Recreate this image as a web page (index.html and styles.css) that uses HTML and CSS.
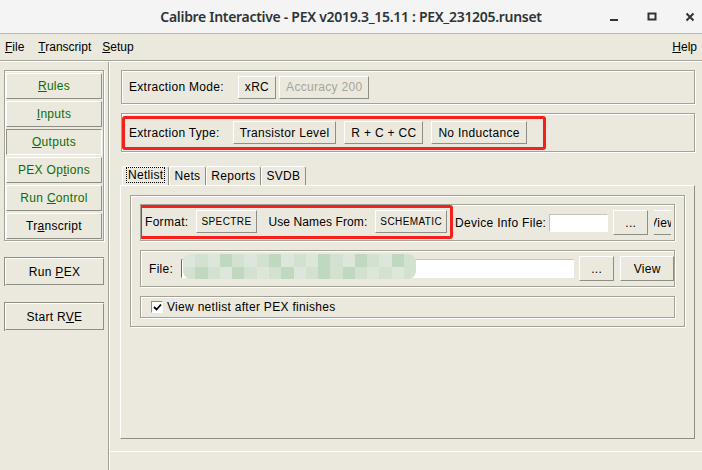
FILE: index.html
```html
<!DOCTYPE html>
<html lang="en">
<head>
  <meta charset="UTF-8">
  <title>Calibre Interactive - PEX</title>
  <link rel="stylesheet" href="styles.css">
</head>
<body>
  <!-- barra de título da janela -->
  <div class="titlebar">
    <span class="title">Calibre Interactive - PEX v2019.3_15.11 : PEX_231205.runset</span>
    <div class="winbtns">
      <svg width="12" height="12" viewBox="0 0 12 12"><rect x="2" y="8" width="8" height="2" fill="#2e3436"/></svg>
      <svg width="12" height="12" viewBox="0 0 12 12"><rect x="2.5" y="2.5" width="7" height="6" fill="none" stroke="#2e3436" stroke-width="2"/></svg>
      <svg width="12" height="12" viewBox="0 0 12 12"><path d="M2.5 2.5 L9.5 9.5 M9.5 2.5 L2.5 9.5" stroke="#2e3436" stroke-width="2"/></svg>
    </div>
  </div>

  <div class="menubar">
    <span class="first"><u>F</u>ile</span>
    <span><u>T</u>ranscript</span>
    <span><u>S</u>etup</span>
    <span class="help"><u>H</u>elp</span>
  </div>

  <div class="main">
    <!-- menu lateral -->
    <aside class="sidebar">
      <div class="group navgroup">
        <button class="navbtn"><u>R</u>ules</button>
        <button class="navbtn"><u>I</u>nputs</button>
        <button class="navbtn pressed"><u>O</u>utputs</button>
        <button class="navbtn">PEX Op<u>t</u>ions</button>
        <button class="navbtn">Run <u>C</u>ontrol</button>
        <button class="navbtn black">Tr<u>a</u>nscript</button>
      </div>
      <div class="frame"><button class="navbtn black">Run <u>P</u>EX</button></div>
      <div class="frame"><button class="navbtn black">Start R<u>V</u>E</button></div>
    </aside>

    <section class="content">
      <div class="panel row mode">
        <span class="label">Extraction Mode:</span>
        <button class="btn">xRC</button>
        <button class="btn disabled">Accuracy 200</button>
      </div>

      <div class="panel row type">
        <div class="mark">
          <span class="label">Extraction Type:</span>
          <button class="btn">Transistor Level</button>
          <button class="btn">R + C + CC</button>
          <button class="btn">No Inductance</button>
        </div>
      </div>

      <div class="tabs">
        <span class="tab active"><span class="focus">Netlist</span></span>
        <span class="tab">Nets</span>
        <span class="tab">Reports</span>
        <span class="tab">SVDB</span>
      </div>

      <div class="tabpage">
        <div class="group inner">
          <div class="panel row fmt">
            <div class="mark">
              <span class="label">Format:</span>
              <button class="btn small">SPECTRE</button>
              <span class="label gap">Use Names From:</span>
              <button class="btn small">SCHEMATIC</button>
            </div>
            <span class="label devlabel">Device Info File:</span>
            <input class="field devinfo" type="text">
            <button class="btn dots">...</button>
            <span class="clip"><button class="btn view">View</button></span>
          </div>

          <div class="panel row file">
            <span class="label">File:</span>
            <div class="filebox">
              <div class="blur">
                <span class="c1"></span><span class="c2"></span><span class="c1"></span><span class="c3"></span><span class="c2"></span><span class="c1"></span><span class="c2"></span><span class="c3"></span><span class="c1"></span><span class="c2"></span><span class="c1"></span><span class="c3"></span><span class="c2"></span><span class="c1"></span><span class="c3"></span><span class="c2"></span><span class="c1"></span><span class="c3"></span><span class="c2"></span>
                <span class="c2"></span><span class="c3"></span><span class="c2"></span><span class="c1"></span><span class="c3"></span><span class="c2"></span><span class="c1"></span><span class="c2"></span><span class="c3"></span><span class="c1"></span><span class="c2"></span><span class="c3"></span><span class="c2"></span><span class="c3"></span><span class="c2"></span><span class="c1"></span><span class="c2"></span><span class="c1"></span><span class="c2"></span>
              </div>
              <input class="field" type="text">
            </div>
            <button class="btn dots">...</button>
            <button class="btn view">View</button>
          </div>

          <div class="panel row check">
            <span class="box">
              <svg width="9" height="9" viewBox="0 0 9 9"><path d="M1 4 L3.5 6.5 L8 1.5" fill="none" stroke="#000" stroke-width="1.8"/></svg>
            </span>
            <span class="label">View netlist after PEX finishes</span>
          </div>
        </div>
      </div>

      <div class="status"></div>
    </section>
  </div>
</body>
</html>
```

FILE: styles.css
```css
body {
  margin: 0;
  width: 702px;
  height: 470px;
  overflow: hidden;
  background: #ebe9dd;
  font-family: "Liberation Sans", Arial, sans-serif;
  font-size: 12px;
  letter-spacing: 0.3px;
  color: #000;
}

button, input {
  font-family: "Liberation Sans", Arial, sans-serif;
  font-size: 12px;
  letter-spacing: 0.3px;
}

.label {
  white-space: nowrap;
}

/* barra de título */
.titlebar {
  height: 33px;
  background: #f4f4f4;
  border-bottom: 1px solid #b8b8b4;
  display: flex;
  align-items: center;
  justify-content: center;
  position: relative;
  letter-spacing: normal;
}

.title {
  font-family: "Noto Sans", sans-serif;
  font-size: 14px;
  font-weight: 600;
  color: #2e3436;
  letter-spacing: -0.3px;
}

.winbtns {
  position: absolute;
  right: 6px;
  top: 11px;
  display: flex;
  gap: 26px;
}

/* menu */
.menubar {
  height: 26px;
  display: flex;
  align-items: center;
  gap: 11px;
  padding: 0 5px;
  border-bottom: 1px solid #a3a298;
  box-shadow: 0 1px 0 #fff;
  letter-spacing: 0;
}

.menubar .first {
  margin-right: 3px;
}

.help {
  margin-left: auto;
}

.main {
  display: flex;
  margin-top: 1px;
  height: 408px;
}

/* lateral */
.sidebar {
  width: 100px;
  padding: 8px 4px 0 4px;
  border-right: 1px solid #a3a298;
  box-shadow: 1px 0 0 #fff;
  display: flex;
  flex-direction: column;
}

.group {
  border: 1px solid #a3a298;
  box-shadow: inset 1px 1px 0 #fff, 1px 1px 0 #fff;
}

.navgroup {
  display: flex;
  flex-direction: column;
  gap: 2px;
  padding: 2px 1px 1px 1px;
}

.navbtn {
  height: 26px;
  background: #ebe9dd;
  border: 1px solid;
  border-color: #fff #8f8e86 #8f8e86 #fff;
  color: #0a6e0a;
  padding: 0;
}

.navbtn.pressed {
  border-color: #8f8e86 #fff #fff #8f8e86;
}

.navbtn.black {
  color: #000;
}

.frame {
  margin-top: 16px;
  border-left: 1px solid #8f8e86;
  border-top: 1px solid #8f8e86;
  display: flex;
  flex-direction: column;
  padding: 0 0 1px 0;
  width: 99px;
}

.frame .navbtn {
  height: 27px;
}

/* área principal */
.content {
  width: 592px;
  padding: 8px 10px 0 12px;
  display: flex;
  flex-direction: column;
}

.panel {
  border: 1px solid #a3a298;
  box-shadow: inset 1px 1px 0 #fff, 1px 1px 0 #fff;
}

.row {
  display: flex;
  align-items: center;
  min-width: 0;
}

.mode {
  height: 32px;
  padding-left: 7px;
}

.mode .label {
  margin-right: 14px;
}

.mode .btn {
  margin-right: 3px;
}

.type {
  margin-top: 9px;
  height: 37px;
}

.mark {
  display: flex;
  align-items: center;
  flex-shrink: 0;
  border: 3px solid #f5201a;
  border-radius: 3px;
  height: 28px;
  padding-left: 4px;
  padding-right: 16px;
}

.type .label {
  margin-right: 13px;
}

.type .btn {
  margin-right: 8px;
}

.type .btn:last-child {
  margin-right: 0;
}

.btn {
  height: 23px;
  background: #ebe9dd;
  border: 1px solid;
  border-color: #fff #8f8e86 #8f8e86 #fff;
  padding: 0 6px;
  color: #000;
}

.btn.disabled {
  color: #a6a59d;
}

.btn.small {
  font-size: 10px;
  letter-spacing: 0.4px;
}

/* abas */
.tabs {
  display: flex;
  margin-top: 14px;
  margin-left: 1px;
  height: 19px;
}

.tab {
  padding: 2px 5px 0 4px;
  border: 1px solid #8f8e86;
  border-bottom: none;
  border-color: #fff #8f8e86 transparent #fff;
  border-radius: 3px 3px 0 0;
}

.tab.active {
  padding: 1px 3px 0 3px;
}

.focus {
  border: 1px dotted #000;
  padding: 0 1px;
}

.tabpage {
  flex: 0 0 auto;
  height: 243px;
  margin-left: -1px;
  border: 1px solid #a3a298;
  border-color: #fff #8f8e86 #8f8e86 #fff;
  padding: 9px 9px 0 9px;
}

.inner {
  padding: 8px 9px 8px 9px;
  display: flex;
  flex-direction: column;
  gap: 9px;
}

.fmt {
  height: 35px;
  overflow: hidden;
}

.fmt .mark {
  margin: -2px 0 0 -2px;
  height: 28px;
  padding-right: 3px;
  padding-left: 3px;
}

.fmt .mark .label {
  margin-right: 8px;
}

.fmt .gap {
  margin-left: 12px;
  margin-right: 3px;
  letter-spacing: 0.1px;
}

.fmt .btn.small {
  padding: 0 4px;
}

.devlabel {
  margin-left: 2px;
  margin-right: 3px;
}

.field {
  height: 17px;
  border: 1px solid;
  border-color: #c5c3b8 #fff #fff #c5c3b8;
  background: #fff;
  padding: 0;
}

.devinfo {
  width: 57px;
  height: 16px;
  flex-shrink: 0;
}

.dots {
  width: 35px;
  height: 25px;
  margin-left: 5px;
  flex-shrink: 0;
}

/* botão View cortado pela borda do painel */
.clip {
  width: 17px;
  height: 25px;
  margin-left: 6px;
  overflow: hidden;
  display: flex;
  justify-content: center;
  flex-shrink: 0;
}

.clip .view {
  margin-left: 0;
  flex-shrink: 0;
}

.file {
  height: 35px;
  padding-left: 8px;
}

.file .label {
  margin-right: 8px;
}

.filebox {
  display: flex;
  align-items: center;
  position: relative;
  width: 393px;
}

.filebox .field {
  width: 393px;
  border-left: 1px solid #6a6a66;
}

.blur {
  position: absolute;
  left: 2px;
  top: -5px;
  width: 233px;
  height: 25px;
  border-radius: 8px;
  overflow: hidden;
  display: grid;
  grid-template-columns: repeat(19, 1fr);
  grid-template-rows: 1fr 1fr;
}

.c1 { background: #dce6da; }
.c2 { background: #d2e1d0; }
.c3 { background: #c1d8c0; }

.view {
  width: 54px;
  height: 25px;
  margin-left: 6px;
}

.check {
  height: 20px;
  padding-left: 10px;
}

.box {
  width: 10px;
  height: 10px;
  background: #fff;
  border: 1px solid;
  border-color: #8f8e86 #fff #fff #8f8e86;
  display: flex;
  align-items: center;
  justify-content: center;
  margin-right: 4px;
}

.status {
  margin-top: 12px;
  margin-left: -12px;
  margin-right: -10px;
  border-top: 1px solid #fff;
}
```
